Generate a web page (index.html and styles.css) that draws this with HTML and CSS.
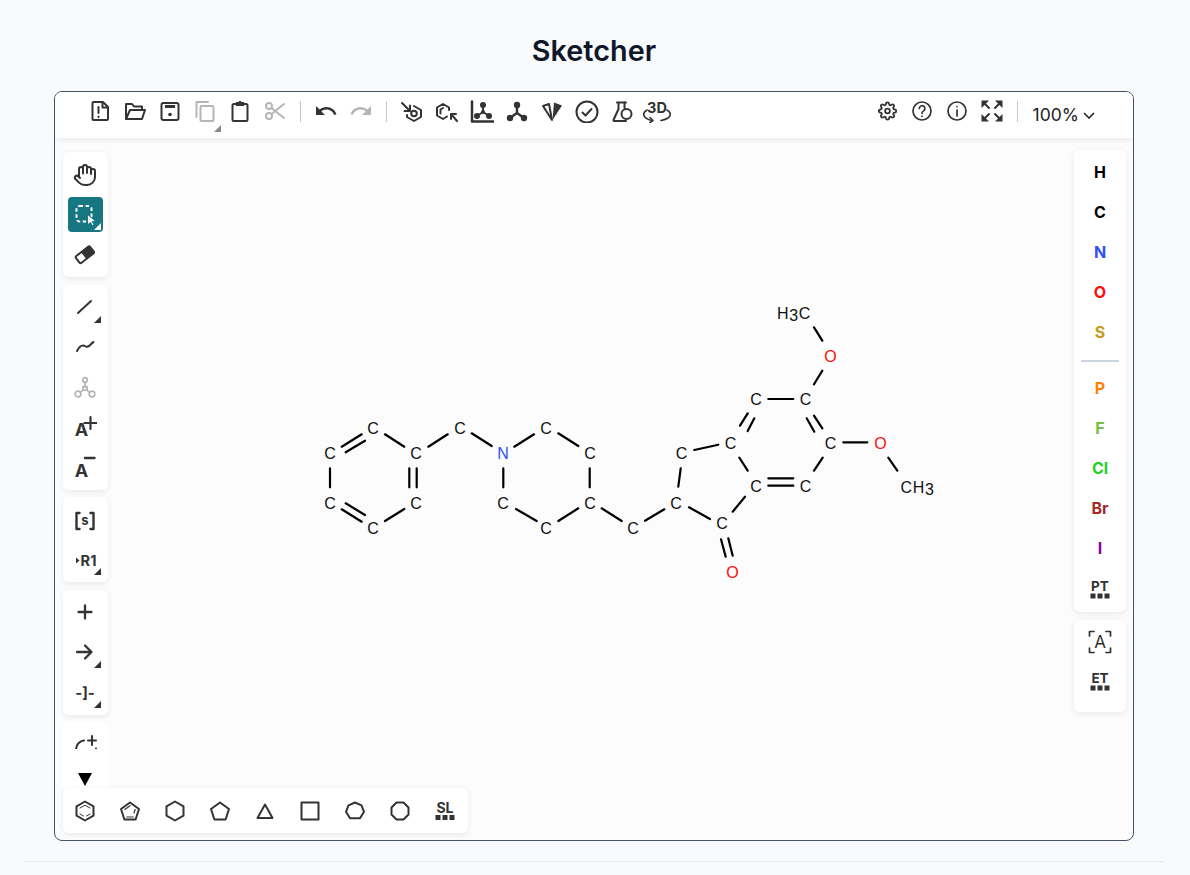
FILE: index.html
```html
<!DOCTYPE html>
<html lang="en">
<head>
    <meta charset="UTF-8">
    <meta name="viewport" content="width=device-width, initial-scale=1.0">
    <title>Sketcher</title>
    <link rel="stylesheet" href="styles.css">
</head>
<body>
<div class="page">
    <h1>Sketcher</h1>

    <div class="editor">
        <div class="toolbar">
            <div class="tool-row">
                <button class="tb"><svg class="ico" viewBox="0 0 24 24"><path d="M5.5 3h9.5l5 5v12a1 1 0 0 1-1 1H5.500a1 1 0 0 1-1-1V4a1 1 0 0 1 1-1z"/><path d="M14.500 3.500V8.500H20"/><path d="M10.500 8v6M10.500 17.500v.5"/></svg></button>
                <button class="tb"><svg class="ico" viewBox="0 0 24 24"><path d="M3 20V5h6l2 2.500h8V11"/><path d="M3 20h16l3-9H7z"/></svg></button>
                <button class="tb"><svg class="ico" viewBox="0 0 24 24"><rect x="3.500" y="4" width="17" height="17" rx="2"/><path class="solid" d="M7 6h10v3H7z"/><circle class="solid" cx="12" cy="15.500" r="1.800"/></svg></button>
                <button class="tb off corner"><svg class="ico" viewBox="0 0 24 24"><rect x="7.500" y="7" width="13" height="15" rx="1"/><path d="M3.500 18V3H15"/></svg></button>
                <button class="tb"><svg class="ico" viewBox="0 0 24 24"><rect x="4.500" y="5" width="15" height="17" rx="1.500"/><path class="solid" d="M8 3h3v-1h2v1h3v4H8z"/></svg></button>
                <button class="tb off"><svg class="ico" viewBox="0 0 24 24"><circle cx="6" cy="7" r="3"/><circle cx="6" cy="17" r="3"/><path d="M8.500 9L21 19M8.500 15L21 5"/></svg></button>
                <span class="sep"></span>
                <button class="tb"><svg class="ico" viewBox="0 0 24 24"><path class="solid" d="M12.500 8c-2.650 0-5.050.99-6.900 2.600L2 7v9h9l-3.620-3.620c1.390-1.160 3.160-1.880 5.120-1.880 3.540 0 6.550 2.310 7.600 5.500l2.370-.78C21.080 11.030 17.150 8 12.500 8z"/></svg></button>
                <button class="tb off"><svg class="ico" viewBox="0 0 24 24"><path class="solid" d="M18.400 10.600C16.550 8.990 14.150 8 11.500 8c-4.650 0-8.580 3.030-9.960 7.220L3.900 16c1.050-3.190 4.050-5.500 7.600-5.500 1.950 0 3.730.72 5.120 1.880L13 16h9V7l-3.600 3.600z"/></svg></button>
                <span class="sep"></span>
                <button class="tb"><svg class="ico" viewBox="0 0 24 24"><path d="M2 4l8 8M10 6.500V12H4.500"/><path d="M14 7l7 4v7l-7 4-7-4v-2"/><circle cx="14" cy="14.500" r="2.800"/></svg></button>
                <button class="tb"><svg class="ico" viewBox="0 0 24 24"><path d="M12 17.500l-4 2.500-6-3.500v-8L8 5l6 3.500V11"/><path d="M8 9l-2.500 1.500v4M16 15l6 7M16 20v-5h5"/></svg></button>
                <button class="tb"><svg class="ico" viewBox="0 0 24 24"><path d="M2 2.500V22.500H24" stroke-width="2.500"/><path d="M13 6v7L7 17M13 13l6 4"/><circle class="solid" cx="13" cy="6" r="3"/><circle class="solid" cx="7" cy="17" r="3"/><circle class="solid" cx="19" cy="17" r="3"/><circle class="solid" cx="13" cy="13" r="2"/></svg></button>
                <button class="tb"><svg class="ico" viewBox="0 0 24 24"><path d="M12 6v8L5 19M12 14l7 5" stroke-width="2.500"/><circle class="solid" cx="12" cy="6" r="3.200"/><circle class="solid" cx="5" cy="19" r="3.200"/><circle class="solid" cx="19" cy="19" r="3.200"/></svg></button>
                <button class="tb"><svg class="ico" viewBox="0 0 24 24"><path d="M3 7l6-2 3 16z"/><path class="solid" d="M12.500 21L14 3.500l8 3z"/></svg></button>
                <button class="tb"><svg class="ico" viewBox="0 0 24 24"><circle cx="12" cy="13" r="10.500"/><path d="M7.500 13.500l3 3 6-6.500"/></svg></button>
                <button class="tb"><svg class="ico" viewBox="0 0 24 24"><path d="M7 3.500h9M8.500 3.500V10L3.500 21a.7.7 0 0 0 .7 1H16"/><path d="M14.500 3.500V9"/><circle cx="16.500" cy="15" r="5"/></svg></button>
                <button class="tb"><svg class="ico wide" viewBox="0 0 30 24"><path d="M5 11C0 14 0 19 10 21.500M25 11c5 3 5 8.500-6 10.500" stroke-width="1.600"/><path d="M8 18.500l3 3-3 2" stroke-width="1.600"/><text class="ico-text" x="15" y="14" font-size="14.500">3D</text></svg></button>
            </div>
            <div class="tool-row">
                <button class="tb"><svg class="ico gear" viewBox="0 0 24 24"><circle cx="12" cy="12" r="3"/><path d="M19.400 15a1.650 1.650 0 0 0 .33 1.820l.06.06a2 2 0 0 1 0 2.830 2 2 0 0 1-2.830 0l-.06-.06a1.650 1.650 0 0 0-1.820-.33 1.650 1.650 0 0 0-1 1.510V21a2 2 0 0 1-2 2 2 2 0 0 1-2-2v-.09A1.650 1.650 0 0 0 9 19.400a1.650 1.650 0 0 0-1.820.33l-.06.06a2 2 0 0 1-2.830 0 2 2 0 0 1 0-2.830l.06-.06a1.650 1.650 0 0 0 .33-1.820 1.650 1.650 0 0 0-1.510-1H3a2 2 0 0 1-2-2 2 2 0 0 1 2-2h.09A1.650 1.650 0 0 0 4.600 9a1.650 1.650 0 0 0-.33-1.820l-.06-.06a2 2 0 0 1 0-2.830 2 2 0 0 1 2.830 0l.06.06a1.650 1.650 0 0 0 1.820.33H9a1.650 1.650 0 0 0 1-1.510V3a2 2 0 0 1 2-2 2 2 0 0 1 2 2v.09a1.650 1.650 0 0 0 1 1.510 1.650 1.650 0 0 0 1.820-.33l.06-.06a2 2 0 0 1 2.830 0 2 2 0 0 1 0 2.830l-.06.06a1.650 1.650 0 0 0-.33 1.820V9a1.650 1.650 0 0 0 1.510 1H21a2 2 0 0 1 2 2 2 2 0 0 1-2 2h-.09a1.650 1.650 0 0 0-1.510 1z"/></svg></button>
                <button class="tb"><svg class="ico thin" viewBox="0 0 24 24"><circle cx="12" cy="12" r="9"/><path d="M9.300 9.500a2.800 2.800 0 1 1 4.300 2.400c-1 .7-1.600 1.200-1.600 2.400M12 17.200v.1"/></svg></button>
                <button class="tb"><svg class="ico thin" viewBox="0 0 24 24"><circle cx="12" cy="12" r="9"/><path d="M12 11v6M12 7.500v.1"/></svg></button>
                <button class="tb"><svg class="ico" viewBox="0 0 24 24"><path class="solid" d="M1.500 1.500H9L1.500 9zM15 1.500h7.500V9zM1.500 15L9 22.500H1.500zM22.500 15v7.500H15z"/><path d="M4 4l5 5M20 4l-5 5M4 20l5-5M20 20l-5-5"/></svg></button>
                <span class="sep"></span>
                <div class="zoom-select">100%<svg class="chevron" viewBox="0 0 12 7"><path d="M1 1l5 5 5-5"/></svg></div>
            </div>
        </div>

        <div class="canvas">
            <svg class="molecule" viewBox="55 138 1078 702">
                <path class="bonds" d="M341.700 446.700L361.700 434.300M345.700 452.300L365 440.700M385 434.300L404.300 446.700M428.300 446.700L447.700 434.300M471.700 433.300L491.700 446M514.300 446.700L534 434.300M558.300 433.300L578.300 446M589.700 468.300V487.300M578.300 508.300L558.300 521M536.700 521L516 509M503.300 487.300V468.300M404.300 509L385 521M365 515L345.700 503.300M361.700 521.700L341.700 509.300M330 468.300V487.300M409.300 468.300V487.300M416.700 468.300V487.300M601.700 508.300L621.700 521M645 520.700L664.300 509.300M689 507.300L710 519M678.300 486.700L680.700 468.300M694.300 450L718.300 444.700M739.300 457.700L747.700 470.700M732.700 511.700L745 496.700M721 539.300L725.700 556.700M728.300 538.300L732.700 555.700M768.300 478.300H793.300M768.300 485.700H793.300M814 470.700L822.700 457.700M814.300 431.700L806.700 418.300M822.300 428.300L814 415.700M768.300 399H793.300M740 425.700L747.700 413.300M747.700 431L754.300 418.300M843.300 442.300H867.300M888.300 457.700L897.300 470.700M814 384.300L822.300 370.700M822.300 340.700L814 327.300"/>
                <text class="atom" x="373" y="434">C</text>
                <text class="atom" x="330" y="459">C</text>
                <text class="atom" x="330" y="509">C</text>
                <text class="atom" x="373" y="534">C</text>
                <text class="atom" x="416" y="509">C</text>
                <text class="atom" x="416" y="459">C</text>
                <text class="atom" x="460" y="434">C</text>
                <text class="atom nitrogen" x="503" y="459">N</text>
                <text class="atom" x="546" y="434">C</text>
                <text class="atom" x="590" y="459">C</text>
                <text class="atom" x="590" y="509">C</text>
                <text class="atom" x="546" y="534">C</text>
                <text class="atom" x="503" y="509">C</text>
                <text class="atom" x="633" y="534">C</text>
                <text class="atom" x="676" y="509">C</text>
                <text class="atom" x="722" y="529">C</text>
                <text class="atom oxygen" x="732.500" y="578">O</text>
                <text class="atom" x="681.500" y="459">C</text>
                <text class="atom" x="730.500" y="449">C</text>
                <text class="atom" x="756" y="492">C</text>
                <text class="atom" x="805.500" y="492">C</text>
                <text class="atom" x="830.500" y="449">C</text>
                <text class="atom" x="805.500" y="405">C</text>
                <text class="atom" x="756" y="405">C</text>
                <text class="atom oxygen" x="830.500" y="362">O</text>
                <text class="atom oxygen" x="880.500" y="449">O</text>
                <text class="atom spaced" x="794" y="319">H<tspan dy="2">3</tspan><tspan dy="-2">C</tspan></text>
                <text class="atom spaced" x="917.500" y="493">CH<tspan dy="2">3</tspan></text>
            </svg>

            <div class="left-panel">
                <div class="group">
                    <button class="btn"><svg class="ico" viewBox="0 0 24 24"><path d="M18 11V6a2 2 0 0 0-4 0M14 10V4a2 2 0 0 0-4 0v2M10 10.500V6a2 2 0 0 0-4 0v8"/><path d="M18 8a2 2 0 1 1 4 0v6a8 8 0 0 1-8 8h-2c-2.800 0-4.500-.86-5.990-2.340l-3.600-3.600a2 2 0 0 1 2.830-2.820L7 15"/></svg></button>
                    <button class="btn selected corner"><svg class="ico" viewBox="0 0 24 24"><rect class="dashed" x="3.500" y="3" width="15" height="15.500" rx="3"/><path class="cursor" d="M14.500 11.500l8 6.500-3.200.5 1.800 3.300-1.800 1-1.800-3.400-2.500 2.100z"/></svg></button>
                    <button class="btn"><svg class="ico" viewBox="0 0 24 24"><g transform="rotate(-38 12 12)"><rect x="3" y="7.500" width="18" height="8.500" rx="1.500"/><path class="solid" d="M10.500 7h9.500a1.500 1.500 0 0 1 1.500 1.500v6a1.500 1.500 0 0 1-1.500 1.500H10.500z"/></g></svg></button>
                </div>
                <div class="group">
                    <button class="btn corner"><svg class="ico" viewBox="0 0 24 24"><path d="M5 18L18 6"/></svg></button>
                    <button class="btn"><svg class="ico" viewBox="0 0 24 24"><path d="M4 16c1.500-3 3.500-5.500 6-5.500s2.500 2 5 1 3.500-3.500 5.500-4.500"/></svg></button>
                    <button class="btn off"><svg class="ico thin" viewBox="0 0 24 24"><circle cx="12" cy="5" r="2.300"/><circle cx="5" cy="19" r="2.800"/><circle cx="19" cy="19" r="2.800"/><path d="M12 7.300L12 12M7.400 17.500L10.500 14.500M16.600 17.500L13.500 14.500"/><rect x="10" y="11.500" width="4" height="3.500"/></svg></button>
                    <button class="btn"><svg class="ico tall" viewBox="0 0 24 32"><text class="ico-text" x="8.500" y="25" font-size="18">A</text><path d="M17.500 6v12M11.500 12h12" stroke-width="2.200"/></svg></button>
                    <button class="btn"><svg class="ico tall" viewBox="0 0 24 32"><text class="ico-text" x="8.500" y="25.500" font-size="18">A</text><path d="M12 7h9.500" stroke-width="2.400"/></svg></button>
                </div>
                <div class="group">
                    <button class="btn"><svg class="ico" viewBox="0 0 24 24"><path d="M6.500 5H3.500v16h3M17.500 5h3v16h-3" stroke-width="2.400"/><text class="ico-text" x="12" y="17" font-size="13">s</text></svg></button>
                    <button class="btn corner"><svg class="ico" viewBox="0 0 24 24"><path class="solid" d="M3 9.500l3.500 3-3.500 3z"/><text class="ico-text" x="15.500" y="17.500" font-size="14.500">R1</text></svg></button>
                </div>
                <div class="group">
                    <button class="btn"><svg class="ico" viewBox="0 0 24 24"><path d="M12 5.500v13M5.500 12h13" stroke-width="2.300"/></svg></button>
                    <button class="btn corner"><svg class="ico" viewBox="0 0 24 24"><path d="M4 12h14M12 5.500l6.500 6.500-6.500 6.500" stroke-width="2.300"/></svg></button>
                    <button class="btn corner"><svg class="ico" viewBox="0 0 24 24"><text class="ico-text" x="12" y="17.500" font-size="15">-]-</text></svg></button>
                </div>
                <div class="group clipped">
                    <button class="btn"><svg class="ico" viewBox="0 0 24 24"><path d="M3 16a9 9 0 0 1 8-8.500M23 15.500v1"/><path d="M19 3v9M15 7.500h8"/></svg></button>
                </div>
                <div class="more"><span class="more-arrow"></span></div>
            </div>

            <div class="bottom-panel">
                <button class="btn"><svg class="ico" viewBox="0 0 24 24"><path d="M12 2.500l8.500 4.800v9.400L12 21.500l-8.500-4.800V7.300z"/><path d="M7 9l5-2.800 5 2.800M7 15l3.500 2M17 15l-3.500 2" stroke-width="1"/></svg></button>
                <button class="btn"><svg class="ico" viewBox="0 0 24 24"><path d="M12 3.500l9 6.500-3.400 10.500H6.400L3 10z"/><path d="M6.800 10.500L12 6.700M8.800 18h6.400M17.200 10.500L16 14" stroke-width="1.200"/></svg></button>
                <button class="btn"><svg class="ico" viewBox="0 0 24 24"><path d="M12 2.500l8.500 4.800v9.400L12 21.500l-8.500-4.800V7.300z"/></svg></button>
                <button class="btn"><svg class="ico" viewBox="0 0 24 24"><path d="M12 3.500l9 6.500-3.400 10.500H6.400L3 10z"/></svg></button>
                <button class="btn"><svg class="ico" viewBox="0 0 24 24"><path d="M12 5.500l7.500 13.500h-15z"/></svg></button>
                <button class="btn"><svg class="ico" viewBox="0 0 24 24"><rect x="3.500" y="3.500" width="17" height="17"/></svg></button>
                <button class="btn"><svg class="ico" viewBox="0 0 24 24"><path d="M12 3.500l6.500 2.800 2.500 6.500-4 6.500H7l-4-6.500 2.500-6.500z"/></svg></button>
                <button class="btn"><svg class="ico" viewBox="0 0 24 24"><path d="M8.500 3.500h7l5 5v7l-5 5h-7l-5-5v-7z"/></svg></button>
                <button class="btn"><svg class="ico" viewBox="0 0 24 24"><text class="ico-text" x="12" y="13.500" font-size="14">SL</text><path class="solid" d="M2.500 16h5v5h-5zM9.500 16h5v5h-5zM16.500 16h5v5h-5z"/></svg></button>
            </div>

            <div class="right-panel">
                <div class="group wide-group top">
                    <button class="btn atom-btn el-h">H</button>
                    <button class="btn atom-btn el-c">C</button>
                    <button class="btn atom-btn el-n">N</button>
                    <button class="btn atom-btn el-o">O</button>
                    <button class="btn atom-btn el-s">S</button>
                    <div class="divider"></div>
                    <button class="btn atom-btn el-p">P</button>
                    <button class="btn atom-btn el-f">F</button>
                    <button class="btn atom-btn el-cl">Cl</button>
                    <button class="btn atom-btn el-br">Br</button>
                    <button class="btn atom-btn el-i">I</button>
                    <button class="btn"><svg class="ico" viewBox="0 0 24 24"><text class="ico-text" x="12" y="13.500" font-size="13.500">PT</text><path class="solid" d="M2.500 16.500h5v5h-5zM9.500 16.500h5v5h-5zM16.500 16.500h5v5h-5z"/></svg></button>
                </div>
                <div class="group wide-group tall-group">
                    <button class="btn"><svg class="ico thin" viewBox="0 0 24 24"><path d="M1.500 6V1.500H6M18 1.500h4.500V6M1.500 18v4.500H6M18 22.500h4.500V18"/><text class="ico-text light" x="12" y="18" font-size="17">A</text></svg></button>
                    <button class="btn"><svg class="ico" viewBox="0 0 24 24"><text class="ico-text" x="12" y="12.500" font-size="13.500">ET</text><path class="solid" d="M2.500 15.500h5v5h-5zM9.500 15.500h5v5h-5zM16.500 15.500h5v5h-5z"/></svg></button>
                </div>
            </div>
        </div>
    </div>

    <div class="rule"></div>
</div>
</body>
</html>
```

FILE: styles.css
```css
body {
    margin: 0;
    background-color: #f8fafc;
    font-family: Inter, "Liberation Sans", sans-serif;
    color: #0f172a;
}
.page {
    width: 1140px;
    margin-left: 24px;
}
h1 {
    margin: 0;
    padding: 32px 0 21px;
    font-size: 28.8px;
    line-height: 38px;
    font-weight: 600;
    text-align: center;
}
.rule {
    height: 1px;
    margin-top: 20px;
    background-color: #e2e8f0;
}
.editor {
    display: flex;
    flex-direction: column;
    box-sizing: border-box;
    height: 750px;
    margin: 0 30px;
    border: 1px solid #43516a;
    border-radius: 8px;
    background-color: #fcfcfc;
    overflow: hidden;
}

/* top toolbar */
.toolbar {
    position: relative;
    z-index: 1;
    display: flex;
    justify-content: space-between;
    box-sizing: border-box;
    height: 46px;
    padding: 0 38px 0 27.5px;
    background-color: #fff;
    box-shadow: 0 2px 6px rgba(0, 0, 0, 0.08);
}
.tool-row {
    display: flex;
    align-items: flex-start;
}
.tb {
    position: relative;
    display: flex;
    justify-content: center;
    width: 35px;
    height: 40px;
    padding: 7px 0 0;
    border: none;
    background: none;
    color: #333;
}
.sep {
    width: 1px;
    height: 21px;
    margin: 9px 7.5px 0;
    background-color: #c3cad6;
}
.zoom-select {
    display: flex;
    align-items: center;
    gap: 4px;
    height: 24px;
    margin: 10px 0 0 7px;
    font-size: 17.5px;
    color: #222;
}
.chevron {
    width: 12px;
    height: 7px;
    margin-top: 3px;
    fill: none;
    stroke: #222;
    stroke-width: 1.6;
}

/* icons */
.ico {
    flex: none;
    width: 24px;
    height: 24px;
    fill: none;
    stroke: currentColor;
    stroke-width: 2;
    stroke-linecap: round;
    stroke-linejoin: round;
}
.ico.wide {
    width: 30px;
}
.ico.tall {
    height: 32px;
}
.ico.thin {
    stroke-width: 1.7;
}
.ico.gear {
    width: 19px;
    stroke-width: 2.3;
}
.btn .ico {
    margin-right: 1px;
}
.ico .solid {
    fill: currentColor;
    stroke: none;
}
.ico .dashed {
    stroke-dasharray: 3.5 2.5;
    stroke-linecap: butt;
}
.ico .cursor {
    fill: #fff;
    stroke: #167782;
    stroke-width: 1;
}
.ico-text {
    font-family: Inter, "Liberation Sans", sans-serif;
    font-weight: 700;
    text-anchor: middle;
    fill: currentColor;
    stroke: none;
}
.ico-text.light {
    font-weight: 400;
}
.tb.off,
.btn.off {
    color: #b5b5b5;
}

/* drawing area */
.canvas {
    position: relative;
    flex: 1;
}
.molecule {
    position: absolute;
    top: 0;
    left: 0;
    width: 100%;
    height: 100%;
}
.bonds {
    fill: none;
    stroke: #000;
    stroke-width: 2.2;
    stroke-linecap: round;
}
.atom {
    font-family: "Liberation Sans", Arial, sans-serif;
    font-size: 16px;
    text-anchor: middle;
    fill: #111;
}
.spaced {
    letter-spacing: 0.6px;
}
.nitrogen {
    fill: #304ff7;
}
.oxygen {
    fill: #ff0d0d;
}

/* floating panels */
.left-panel,
.right-panel {
    position: absolute;
    display: flex;
    flex-direction: column;
    gap: 7.5px;
}
.left-panel {
    top: 14px;
    left: 8px;
    width: 45px;
}
.right-panel {
    top: 12px;
    right: 7px;
    width: 52px;
}
.bottom-panel {
    position: absolute;
    left: 8px;
    bottom: 7px;
    display: flex;
    gap: 10px;
    padding: 5px;
    border-radius: 6px;
    background-color: #fff;
    box-shadow: 0 2px 6px rgba(0, 0, 0, 0.08);
}
.group {
    display: flex;
    flex-direction: column;
    align-items: center;
    gap: 5px;
    padding: 5px 0;
    border-radius: 6px;
    background-color: #fff;
    box-shadow: 0 2px 6px rgba(0, 0, 0, 0.08);
}
.group.top {
    padding-bottom: 6px;
}
.group.tall-group {
    padding-bottom: 12px;
}
.group.clipped {
    height: 22px;
    padding-bottom: 0;
    border-radius: 6px 6px 0 0;
    box-shadow: none;
    overflow: hidden;
}
.more {
    display: flex;
    justify-content: center;
    height: 39px;
    margin-top: -7.5px;
    background-color: #fff;
}
.more-arrow {
    width: 0;
    height: 0;
    margin: 24px 1px 0 0;
    border-top: 13px solid #000;
    border-left: 7px solid transparent;
    border-right: 7px solid transparent;
}
.btn {
    position: relative;
    flex: none;
    display: flex;
    align-items: center;
    justify-content: center;
    width: 35px;
    height: 35px;
    padding: 0;
    border: none;
    border-radius: 4px;
    background: none;
    color: #333;
}
.btn.selected {
    background-color: #167782;
    color: #fff;
}
.corner::after {
    content: "";
    position: absolute;
    right: 2px;
    bottom: 2px;
    border-left: 7px solid transparent;
    border-bottom: 7px solid #333;
}
.tb.corner::after {
    right: 2px;
    bottom: 0;
    border-bottom-color: #888;
}
.selected.corner::after {
    border-bottom-color: #fff;
}

/* element buttons */
.atom-btn {
    padding-bottom: 2px;
    font-family: Inter, "Liberation Sans", sans-serif;
    font-size: 16px;
    font-weight: 700;
}
.divider {
    width: 38px;
    height: 2px;
    margin: 5px 0 4px;
    background-color: #cbd5e1;
}
.el-h, .el-c { color: #000; }
.el-n { color: #304ff7; }
.el-o { color: #ff0d0d; }
.el-s { color: #c99a1b; }
.el-p { color: #ff8000; }
.el-f { color: #78bc42; }
.el-cl { color: #1fd01f; }
.el-br { color: #a62929; }
.el-i { color: #940094; }
```
